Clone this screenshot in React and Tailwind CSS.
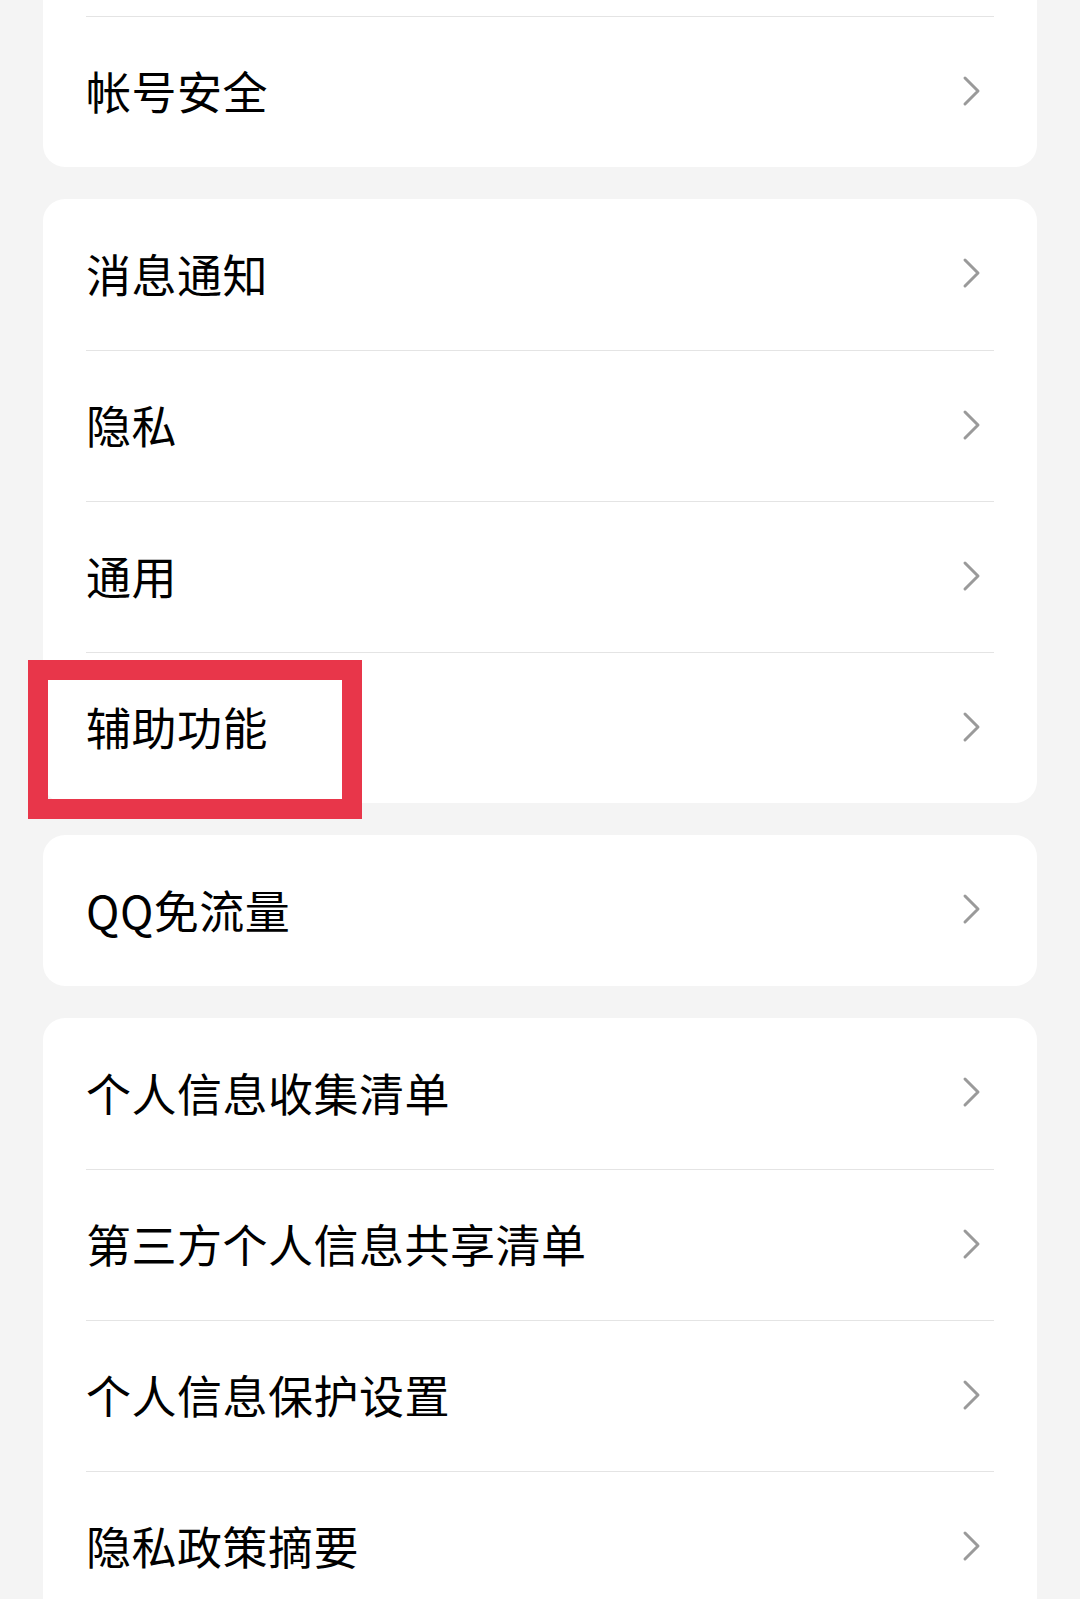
import React from "react";

const groups = [
  ["", "帐号安全"],
  ["消息通知", "隐私", "通用", "辅助功能"],
  ["QQ免流量"],
  ["个人信息收集清单", "第三方个人信息共享清单", "个人信息保护设置", "隐私政策摘要"],
];

function Chevron() {
  return (
    <svg width="22" height="32" viewBox="0 0 22 32" className="shrink-0 -mt-[3px]">
      <path d="M4 3 L17 16 L4 29" fill="none" stroke="#9a9a9a" strokeWidth="3" strokeLinecap="round" strokeLinejoin="round" />
    </svg>
  );
}

function Row({ label, first, highlight }) {
  return (
    <div className="relative pl-[43px] pr-[43px]">
      <div className={`h-[151px] flex items-center justify-between ${first ? "" : "border-t border-[#e4e4e4]"}`}>
        <span className="text-[45px] text-black leading-none tracking-[0.5px] -mt-[3px]">{label}</span>
        {label && (
          <div className="mr-[11px]">
            <Chevron />
          </div>
        )}
      </div>
      {highlight && (
        <div className="absolute left-[-15px] top-[8px] w-[334px] h-[159px] border-[20px] border-[#e8364a]" />
      )}
    </div>
  );
}

export default function App() {
  return (
    <div
      className="w-[1080px] h-[1599px] overflow-hidden bg-[#f4f4f4] px-[43px]"
      style={{ fontFamily: '"Noto Sans CJK SC", "Noto Sans", sans-serif' }}
    >
      <div className="-mt-[135px] flex flex-col gap-[32px]">
        {groups.map((items, gi) => (
          <div key={gi} className="bg-white rounded-[22px]">
            {items.map((label, i) => (
              <Row key={label || "top"} label={label} first={i === 0} highlight={label === "辅助功能"} />
            ))}
          </div>
        ))}
      </div>
    </div>
  );
}
